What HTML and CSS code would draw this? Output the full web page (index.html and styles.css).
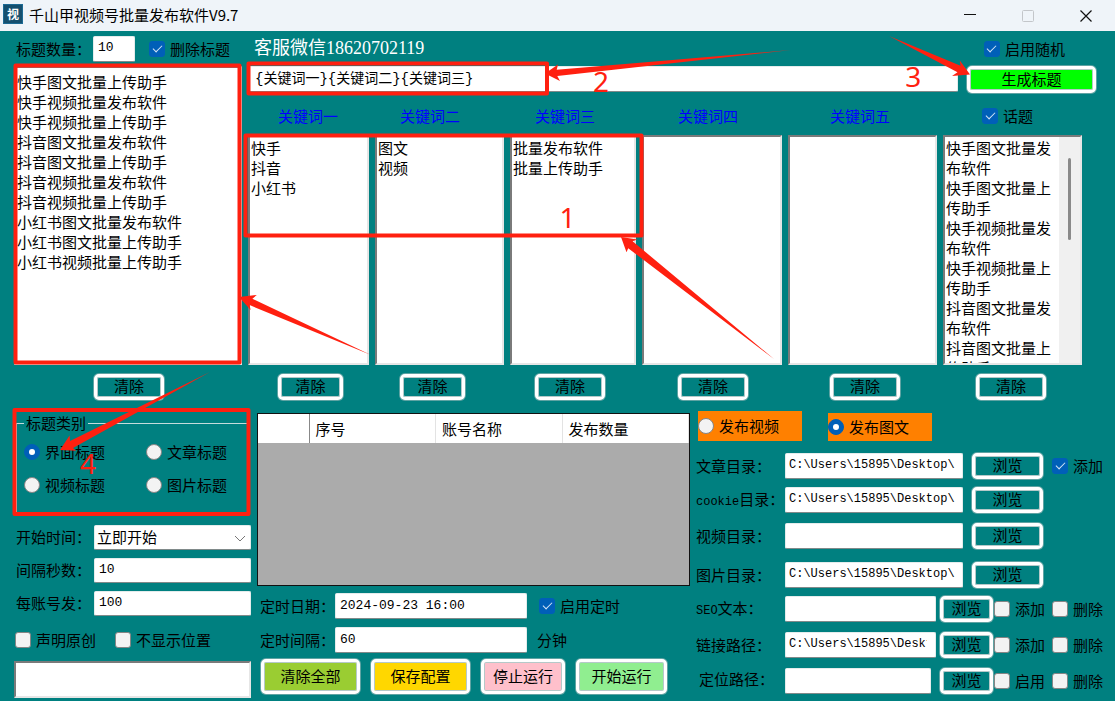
FILE: index.html
```html
<!DOCTYPE html>
<html lang="zh-CN">
<head>
<meta charset="utf-8">
<title>千山甲视频号批量发布软件V9.7</title>
<link rel="stylesheet" href="styles.css">
</head>
<body>
<header class="titlebar">
  <span class="app-icon">视</span>
  <h1 class="app-title">千山甲视频号批量发布软件V9.7</h1>
  <button class="win-btn" aria-label="最小化"><svg width="12" height="12" viewBox="0 0 12 12"><path d="M0 4.5H12" stroke="#111"/></svg></button>
  <button class="win-btn" aria-label="最大化" disabled><svg width="12" height="12" viewBox="0 0 12 12"><rect x=".5" y=".5" width="11" height="11" rx="1" fill="none" stroke="#c3c6ca"/></svg></button>
  <button class="win-btn" aria-label="关闭"><svg width="12" height="12" viewBox="0 0 12 12"><path d="M.5 .5L11.500 11.500M11.500 .5L.5 11.500" stroke="#111" stroke-width="1.200"/></svg></button>
</header>
<main class="window">
  <section class="upper">
    <div class="titles">
      <div class="titles-bar">
        <label for="count">标题数量：</label>
        <input class="field count" id="count" value="10">
        <label class="check"><input type="checkbox" checked>删除标题</label>
      </div>
      <textarea class="box list" aria-label="标题列表">快手图文批量上传助手
快手视频批量发布软件
快手视频批量上传助手
抖音图文批量发布软件
抖音图文批量上传助手
抖音视频批量发布软件
抖音视频批量上传助手
小红书图文批量发布软件
小红书图文批量上传助手
小红书视频批量上传助手</textarea>
      <button class="btn clear clear-titles">清除</button>
    </div>
    <div class="builder">
      <div class="contact-bar">
        <span class="contact">客服微信18620702119</span>
        <label class="check random"><input type="checkbox" checked>启用随机</label>
      </div>
      <div class="pattern-bar">
        <input class="field pattern" aria-label="标题组合" value="{关键词一}{关键词二}{关键词三}">
        <button class="btn generate">生成标题</button>
      </div>
      <div class="columns">
        <div class="col col-1">
          <label class="col-head" for="k1">关键词一</label>
          <textarea class="box" id="k1">快手
抖音
小红书</textarea>
          <button class="btn clear">清除</button>
        </div>
        <div class="col col-2">
          <label class="col-head" for="k2">关键词二</label>
          <textarea class="box" id="k2">图文
视频</textarea>
          <button class="btn clear">清除</button>
        </div>
        <div class="col col-3">
          <label class="col-head" for="k3">关键词三</label>
          <textarea class="box" id="k3">批量发布软件
批量上传助手</textarea>
          <button class="btn clear">清除</button>
        </div>
        <div class="col col-4">
          <label class="col-head" for="k4">关键词四</label>
          <textarea class="box" id="k4"></textarea>
          <button class="btn clear">清除</button>
        </div>
        <div class="col col-5">
          <label class="col-head" for="k5">关键词五</label>
          <textarea class="box" id="k5"></textarea>
          <button class="btn clear">清除</button>
        </div>
        <div class="col col-6">
          <label class="col-head topic check"><input type="checkbox" checked>话题</label>
          <div class="box scroll-box">
            <textarea class="scroll-text" aria-label="话题列表">快手图文批量发布软件
快手图文批量上传助手
快手视频批量发布软件
快手视频批量上传助手
抖音图文批量发布软件
抖音图文批量上传助手</textarea>
            <div class="scroll-track"><div class="scroll-thumb"></div></div>
          </div>
          <button class="btn clear">清除</button>
        </div>
      </div>
    </div>
  </section>

  <section class="lower">
    <div class="settings">
      <fieldset class="kind">
        <legend>标题类别</legend>
        <div class="kind-grid">
          <label class="radio"><input type="radio" name="kind" checked>界面标题</label>
          <label class="radio"><input type="radio" name="kind">文章标题</label>
          <label class="radio"><input type="radio" name="kind">视频标题</label>
          <label class="radio"><input type="radio" name="kind">图片标题</label>
        </div>
      </fieldset>
      <div class="settings-form">
        <label for="start">开始时间：</label>
        <span class="select-wrap">
          <select class="field" id="start"><option>立即开始</option></select>
          <svg class="chevron" width="12" height="7" viewBox="0 0 12 7"><path d="M1 1L6 6L11 1" fill="none" stroke="#777"/></svg>
        </span>
        <label for="gap">间隔秒数：</label>
        <input class="field" id="gap" value="10">
        <label for="per">每账号发：</label>
        <input class="field" id="per" value="100">
      </div>
      <div class="options">
        <label class="check"><input type="checkbox">声明原创</label>
        <label class="check"><input type="checkbox">不显示位置</label>
      </div>
      <textarea class="box log" aria-label="日志"></textarea>
    </div>

    <div class="accounts">
      <div class="table-wrap">
        <table>
          <thead><tr><th class="row-head"></th><th>序号</th><th>账号名称</th><th>发布数量</th></tr></thead>
        </table>
      </div>
      <div class="timing">
        <label for="date">定时日期：</label>
        <input class="field" id="date" value="2024-09-23 16:00">
        <label class="check"><input type="checkbox" checked>启用定时</label>
        <label for="every">定时间隔：</label>
        <input class="field" id="every" value="60">
        <span>分钟</span>
      </div>
      <div class="actions">
        <button class="btn act-clear">清除全部</button>
        <button class="btn act-save">保存配置</button>
        <button class="btn act-stop">停止运行</button>
        <button class="btn act-start">开始运行</button>
      </div>
    </div>

    <div class="paths">
      <div class="modes">
        <label class="radio mode"><input type="radio" name="mode">发布视频</label>
        <label class="radio mode mode-low"><input type="radio" name="mode" checked>发布图文</label>
      </div>
      <div class="path-row">
        <label for="p1">文章目录：</label>
        <input class="field path" id="p1" value="C:\Users\15895\Desktop\">
        <button class="btn browse">浏览</button>
        <label class="check"><input type="checkbox" checked>添加</label>
      </div>
      <div class="path-row gap-s">
        <label for="p2"><span class="latin">cookie</span>目录：</label>
        <input class="field path" id="p2" value="C:\Users\15895\Desktop\">
        <button class="btn browse">浏览</button>
      </div>
      <div class="path-row gap-m">
        <label for="p3">视频目录：</label>
        <input class="field path" id="p3">
        <button class="btn browse">浏览</button>
      </div>
      <div class="path-row gap-l">
        <label for="p4">图片目录：</label>
        <input class="field path" id="p4" value="C:\Users\15895\Desktop\">
        <button class="btn browse">浏览</button>
      </div>
      <div class="path-row short gap-s">
        <label for="p5"><span class="latin">SEO</span>文本：</label>
        <input class="field path" id="p5">
        <button class="btn browse">浏览</button>
        <label class="check"><input type="checkbox">添加</label>
        <label class="check"><input type="checkbox">删除</label>
      </div>
      <div class="path-row short gap-m">
        <label for="p6">链接路径：</label>
        <input class="field path clipped" id="p6" value="C:\Users\15895\Desktop\">
        <button class="btn browse">浏览</button>
        <label class="check"><input type="checkbox">添加</label>
        <label class="check"><input type="checkbox">删除</label>
      </div>
      <div class="path-row short place gap-m">
        <label for="p7">定位路径：</label>
        <input class="field path" id="p7">
        <button class="btn browse">浏览</button>
        <label class="check"><input type="checkbox">启用</label>
        <label class="check"><input type="checkbox">删除</label>
      </div>
    </div>
  </section>
</main>

<div class="notes">
  <svg class="marks" viewBox="0 0 1115 701" preserveAspectRatio="none">
    <g fill="none" stroke="#ff2010" stroke-width="4" stroke-linejoin="round">
      <rect x="15.500" y="65.500" width="224" height="297"/>
      <rect x="248.500" y="63.500" width="298.500" height="30"/>
      <rect x="245.500" y="135.500" width="396" height="100"/>
      <rect x="14.500" y="410" width="234" height="104"/>
    </g>
    <g fill="#ff2010">
      <path d="M774 359L628.200 248.200L626.500 252.200L621 237L637.400 239.500L632.600 241.300Z"/>
      <path d="M371 355L249.600 305.100L250.600 310L239 297L256.800 295L252.400 298.700Z"/>
      <path d="M791 50L557.300 76L560 81L545 73.500L558 64.500L556.700 69.800Z"/>
      <path d="M889 36L960.500 65.800L959.800 60.400L970 74.500L952 76L957.500 72.200Z"/>
      <path d="M210 372L73 448L76 450.700L60 450L69.600 435.500L70 440.900Z"/>
    </g>
  </svg>
  <span class="num num-1">1</span>
  <span class="num num-2">2</span>
  <span class="num num-3">3</span>
  <span class="num num-4">4</span>
</div>
</body>
</html>
```
FILE: styles.css
```css
* { box-sizing: border-box; }

body {
  position: relative;
  margin: 0;
  min-height: 100vh;
  background: #008080;
  color: #000;
  font: 15px/20px "Noto Sans CJK SC", sans-serif;
}

button, input, select, textarea { margin: 0; font: inherit; color: inherit; }
label { white-space: nowrap; }

/* Title bar */
.titlebar {
  display: flex;
  align-items: center;
  height: 31px;
  padding-left: 3px;
  background: #eff4f9;
}
.app-icon {
  width: 20px;
  height: 20px;
  margin-bottom: 3px;
  background: #15506f;
  border: 1px solid #1c6a94;
  color: #fff;
  font-size: 12px;
  font-weight: 700;
  line-height: 17px;
  text-align: center;
}
.app-title {
  flex: 1;
  margin: 0 0 2px 6px;
  font-size: 15px;
  font-weight: 400;
}
.win-btn {
  display: grid;
  place-items: center;
  width: 58px;
  height: 30px;
  padding: 0;
  border: 0;
  background: none;
}

/* Shared controls */
.field {
  width: 100%;
  min-width: 0;
  height: 26px;
  padding: 0 4px 2px;
  border: 1px solid #e4ecec;
  border-bottom-color: #808a8a;
  border-radius: 2px;
  background: #fff;
  font: 13px/20px "Liberation Mono", "Noto Sans CJK SC", monospace;
}
.field.path { padding: 0 3px 2px; font-size: 12px; }
.field.clipped { padding-right: 8px; }

.btn {
  height: 26px;
  padding: 0 0 2px;
  border: 3px solid #fff;
  border-radius: 5px;
  background: #008080;
  box-shadow: inset 0 0 0 1px #b5c9c9, 0 0 0 1px #5fa3a3;
  line-height: 18px;
  white-space: nowrap;
}

.box {
  display: block;
  width: 100%;
  height: 230px;
  padding: 1px;
  border: 2px solid;
  border-color: #7a7a7a #e6e6e6 #e6e6e6 #7a7a7a;
  border-radius: 0;
  background: #fff;
  line-height: 20px;
  resize: none;
  overflow: hidden;
}

.check, .radio { display: flex; align-items: center; gap: 5px; }
.check input, .radio input {
  appearance: none;
  display: grid;
  place-items: center;
  flex: none;
  width: 16px;
  height: 16px;
  border: 1px solid #858585;
  border-radius: 3px;
  background: #f3f3f3;
}
.radio input { border-radius: 50%; }
.check input:checked, .radio input:checked { border-color: #005fb8; background: #005fb8; }
.check input:checked::before {
  content: "";
  width: 8px;
  height: 4px;
  margin-bottom: 3px;
  border: solid #d5e6f7;
  border-width: 0 0 1px 1px;
  transform: rotate(-45deg);
}
.radio input:checked::before {
  content: "";
  width: 6px;
  height: 6px;
  border-radius: 50%;
  background: #fff;
}

/* Upper half */
.upper {
  display: grid;
  grid-template-columns: minmax(0, 228fr) minmax(0, 848fr);
  gap: 6px;
  padding: 0 19px 0 14px;
}
.titles-bar {
  display: flex;
  align-items: center;
  height: 35px;
  padding-left: 2px;
}
.field.count { width: 42px; margin: 0 14px 0 2px; font-size: 13px; }
.list { height: 299px; padding-top: 4px; }
.clear { width: 70px; margin: 9px 0 0 var(--inset); }
.clear-titles { --inset: 80px; }

.contact-bar {
  display: flex;
  align-items: center;
  justify-content: space-between;
  height: 35px;
  padding: 0 31px 0 6px;
}
.contact {
  padding-bottom: 2px;
  color: #fff;
  font-family: "Liberation Serif", "Noto Sans CJK SC", serif;
  font-size: 18px;
}
.pattern-bar { display: flex; gap: 9px; height: 27px; }
.field.pattern { flex: 1; padding: 0 6px 4px; font-size: 14px; }
.generate {
  width: 129px;
  height: 27px;
  background: #00ff00;
  line-height: 20px;
}

.columns {
  display: grid;
  grid-template-columns: 121fr 129fr 126fr 140fr 149fr 139fr;
  gap: 6px;
  padding-right: 14px;
}
.col { min-width: 0; }
.col-head {
  display: flex;
  align-items: center;
  height: 42px;
  padding: 4px 0 0 var(--inset);
  color: #0000ff;
}
.col-1 { --inset: 30px; }
.col-2, .col-3 { --inset: 25px; }
.col-4 { --inset: 36px; }
.col-5 { --inset: 42px; }
.col-6 { --inset: 33px; }
.col-1 .clear, .col-2 .clear { width: 65px; }
.topic { padding-left: 39px; color: #000; }
.scroll-box { display: flex; padding: 0; }
.scroll-text {
  flex: 1;
  min-width: 0;
  padding: 1px;
  border: 0;
  background: #fff;
  line-height: 20px;
  resize: none;
  overflow: hidden;
}
.scroll-track { width: 21px; padding: 21px 0 0 9px; background: #f0f0f0; }
.scroll-thumb { width: 3px; height: 82px; border-radius: 2px; background: #8a8a8a; }

/* Lower half */
.lower {
  display: grid;
  grid-template-columns: minmax(0, 237fr) minmax(0, 433fr) minmax(0, 411fr);
  gap: 6px;
  padding: 0 8px 0 14px;
}
.settings { padding-top: 11px; }
.kind {
  margin: 0 2px;
  padding: 0 0 11px 7px;
  border: 1px solid #c5dcdc;
}
.kind legend { height: 24px; padding: 0 2px; line-height: 24px; }
.kind-grid { display: grid; grid-template-columns: 122px 1fr; grid-auto-rows: 33px; }
.settings-form {
  display: grid;
  grid-template-columns: 80px minmax(0, 1fr);
  gap: 8px 0;
  align-items: center;
  margin-top: 12px;
}
.settings-form label { padding: 0 0 2px 2px; }
.settings-form .field { height: 25px; }
.select-wrap { position: relative; display: block; height: 25px; }
.select-wrap select {
  appearance: none;
  padding-left: 2px;
  font-family: "Noto Sans CJK SC", sans-serif;
  font-size: 15px;
}
.chevron { position: absolute; right: 5px; top: 10px; }
.options { display: flex; gap: 19px; margin-top: 14px; padding-left: 1px; }
.log { height: 37px; margin-top: 11px; }

.accounts { padding-top: 13px; }
.table-wrap { height: 173px; border: 1px solid #111; background: #ababab; }
table { width: 100%; table-layout: fixed; border-collapse: collapse; }
th {
  height: 29px;
  padding: 0 6px;
  border-right: 1px solid #e3e3e3;
  background: #fff;
  font-weight: 400;
  text-align: left;
}
.row-head { width: 51px; border-right-color: #888; }
.timing {
  display: grid;
  grid-template-columns: 75px minmax(0, 192fr) minmax(0, 163fr);
  gap: 8px 0;
  align-items: center;
  margin-top: 7px;
  padding-left: 3px;
}
.timing .check { padding-left: 12px; }
.timing span { padding-left: 10px; }
.timing label[for] { line-height: 26px; }
.actions { display: flex; gap: 11px; margin-top: 6px; padding-left: 4px; }
.actions .btn { width: 99px; height: 35px; }
.actions .act-clear { background: #9acd32; }
.actions .act-save { background: #ffd700; }
.actions .act-stop { width: 84px; background: #ffc0cb; }
.actions .act-start { width: 91px; background: #90ee90; }

.paths { padding-top: 11px; }
.modes { display: flex; align-items: flex-end; gap: 26px; margin-bottom: 12px; padding-left: 2px; }
.mode { width: 104px; height: 30px; background: #ff8000; }
.mode-low { height: 28px; }
.path-row {
  display: grid;
  grid-template-columns: 89px minmax(0, 1fr) 80px 64px;
  align-items: center;
  height: 26px;
}
.path-row .browse { margin-left: 9px; }
.path-row .browse + .check { padding-left: 9px; }
.path-row.short { grid-template-columns: 89px minmax(0, 1fr) 57px 59px 55px; }
.path-row.short .browse { margin-left: 4px; }
.path-row.short .browse + .check { padding-left: 1px; }
.place .field { width: auto; margin-right: 5px; }
.place label[for] { padding: 0 0 4px 3px; }
.latin { font: 12px/20px "Liberation Mono", monospace; }
.gap-s { margin-top: 8px; }
.gap-m { margin-top: 10px; }
.gap-l { margin-top: 13px; }

/* Tutorial notes drawn over the window */
.notes { position: absolute; left: 0; top: 0; width: 100%; height: 701px; pointer-events: none; }
.marks { display: block; width: 100%; height: 100%; }
.num {
  position: absolute;
  margin-left: 2px;
  color: #ff2010;
  font: 28px/28px "Noto Sans", sans-serif;
}
.num-1 { left: 50%; top: 203px; }
.num-2 { left: 53%; top: 67px; }
.num-3 { left: 81%; top: 62px; }
.num-4 { left: 7%; top: 449px; }
```
